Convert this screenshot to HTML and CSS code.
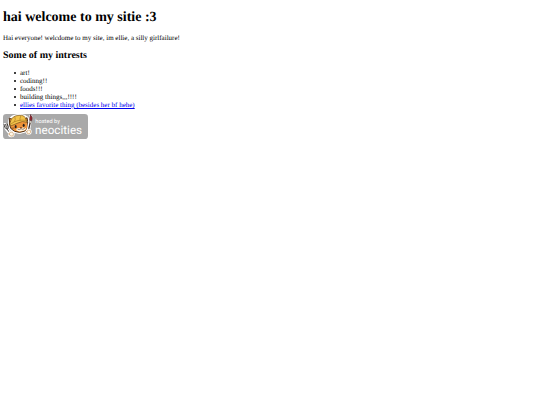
FILE: index.html
```html
<!DOCTYPE html>
<html lang="en">
<head>
<meta charset="utf-8">
<title>hai welcome to my sitie :3</title>
<link rel="stylesheet" href="styles.css">
</head>
<body>
<h1>hai welcome to my sitie :3</h1>
<p>Hai everyone! welcdome to my site, im ellie, a silly girlfailure!</p>
<h2>Some of my intrests</h2>
<ul>
  <li>art!</li>
  <li>codinng!!</li>
  <li>foods!!!</li>
  <li>building things,,,!!!!</li>
  <li><a href="#favorite">ellies favorite thing (besides her bf hehe)</a></li>
</ul>
<svg class="badge" viewBox="0 0 255 75" role="img" aria-label="hosted by neocities">
  <rect width="255" height="75" rx="10" fill="#a9a9a9"/>
  <g stroke-linejoin="round" stroke-linecap="round">
    <path d="M18 16 Q23 5 37 3 Q51 -1 65 4 L75 10 Q79 18 79 32 Q80 47 67 54 Q51 62 32 55 Q16 47 17 31 Z" fill="#fff" stroke="#fff" stroke-width="3"/>
    <path d="M20 30 L19 13 Q29 15 33 20 L64 17 L72 11 Q75 22 74 36 Q75 48 63 52 Q50 58 35 52 Q20 45 20 30Z" fill="#ee9338" stroke="#4b2c12" stroke-width="3"/>
    <path d="M22 22 Q27 5 48 4 Q66 2 69 17 L72 25 Q58 19 45 27 Q33 32 23 36 Q19 29 22 22Z" fill="#f3c34a" stroke="#76501c" stroke-width="2"/>
    <path d="M25 29 Q43 15 69 19 M36 10 Q39 18 34 23 M53 7 Q50 13 51 19" fill="none" stroke="#a87820" stroke-width="2"/>
    <path d="M40 45 Q47 40 53 44 Q61 38 69 43 Q68 50 58 51 Q46 54 40 49Z" fill="#fff4df"/>
    <ellipse cx="38" cy="38" rx="3" ry="5" fill="#27211e"/>
    <ellipse cx="62" cy="34" rx="3" ry="5" fill="#27211e"/>
    <path d="M50 40 L57 39 L54 43Z" fill="#5a241b"/>
    <path d="M45 46 Q50 49 54 44 Q60 49 65 43 M24 43 L33 42" fill="none" stroke="#5a3c22" stroke-width="2"/>
    <path d="M6 32 L10 44 L23 60" fill="none" stroke="#fff" stroke-width="10"/>
    <path d="M3 31 L5 39 Q7 45 14 45 Q18 39 13 30 M8 31 L10 40 M12 45 L23 60" fill="none" stroke="#46413e" stroke-width="3"/>
    <path d="M83 8 L80 27 L76 51" fill="none" stroke="#fff" stroke-width="10"/>
    <path d="M83 20 L76 50" stroke="#443029" stroke-width="4"/>
    <path d="M83 3 Q90 10 86 20 L80 19 Q79 9 83 3Z" fill="#9c2630" stroke="#542329" stroke-width="2"/>
    <path d="M81 20 L86 21 L84 28 L79 27Z" fill="#ddd6ca" stroke="#554942"/>
    <circle cx="25" cy="60" r="10" fill="#fff"/>
    <circle cx="77" cy="53" r="9" fill="#fff"/>
    <path d="M18 60 Q20 52 28 54 Q34 59 30 66 Q22 70 18 60Z M71 52 Q75 45 82 49 Q86 57 78 60 Q70 60 71 52Z" fill="#fff7e8" stroke="#c99b69" stroke-width="2"/>
  </g>
  <text class="hosted" x="97" y="28">hosted by</text>
  <text class="brand" x="96" y="59">neocities</text>
</svg>
</body>
</html>
```
FILE: styles.css
```css
body {
  margin: 10px 3px 3px;
  background: #fff;
  color: #000;
  font-family: "Liberation Serif", "Times New Roman", serif;
  font-size: 7px;
  line-height: 8px;
  text-rendering: geometricPrecision;
}
h1 {
  margin: 0 0 9px;
  font-size: 14px;
  line-height: 15px;
}
p {
  margin: 0 0 8px;
}
h2 {
  margin: 0 0 7px;
  font-size: 10px;
  line-height: 12px;
}
ul {
  margin: 0 0 5px;
  padding-left: 11px;
  list-style: none;
}
li {
  display: flex;
  align-items: center;
  gap: 4px;
}
li::before {
  content: "";
  width: 2px;
  height: 2px;
  border-radius: 50%;
  background: #000;
}
a {
  color: #0000ee;
}
.badge {
  display: block;
  width: 85px;
  height: 25px;
}
.badge text {
  fill: #fff;
  font-family: Roboto, "Open Sans", sans-serif;
}
.hosted {
  font-size: 17px;
}
.brand {
  font-size: 35px;
}
```
